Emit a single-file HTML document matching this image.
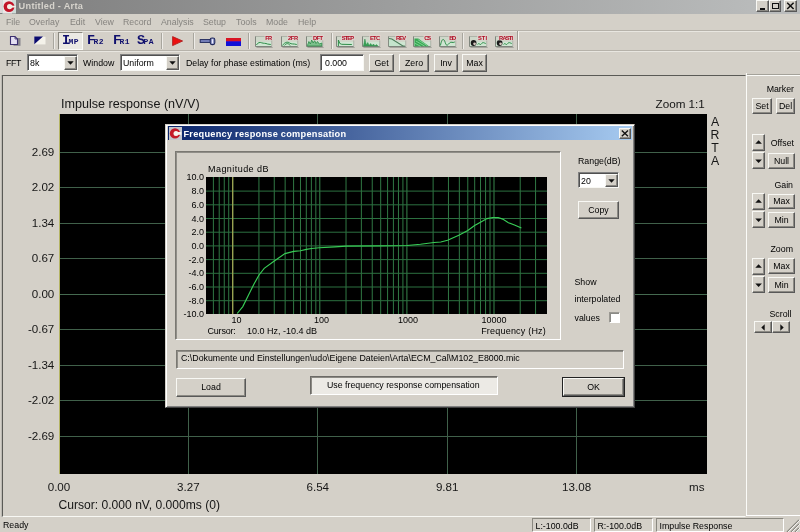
<!DOCTYPE html>
<html><head><meta charset="utf-8">
<style>
*{box-sizing:border-box;margin:0;padding:0}
html,body{width:800px;height:532px;overflow:hidden;background:#d4d0c8}
body{font-family:"Liberation Sans",sans-serif;font-size:8.8px;color:#000;position:relative}
.a{position:absolute}
.t{position:absolute;white-space:nowrap;line-height:10px;height:10px}
.p{position:absolute;white-space:nowrap;line-height:14px;height:14px;font-size:12px;color:#161616}
.btn{position:absolute;background:#d4d0c8;border:1px solid;border-color:#f8f8f4 #585858 #585858 #f8f8f4;box-shadow:inset -1px -1px 0 #8c8a84;text-align:center;white-space:nowrap}
.sunk{position:absolute;background:#fff;border:1px solid;border-color:#808080 #f8f8f4 #f8f8f4 #808080;box-shadow:inset 1px 1px 0 #505050}
.m{position:absolute;top:17.3px;color:#85837f;line-height:10px;white-space:nowrap}
.sep{position:absolute;top:33px;width:2px;height:16px;border-left:1px solid #a8a69e;border-right:1px solid #eeece8}
</style></head><body><div id="root" style="position:absolute;left:0;top:0;width:800px;height:532px;will-change:transform;filter:blur(0.5px)">

<div class="a" style="left:0;top:0;width:800px;height:13.6px;background:linear-gradient(90deg,#7e7e7e 0%,#bcbebe 100%)"></div>
<div class="t" style="left:18.6px;top:1.3px;font-weight:bold;color:#d6d3cc;font-size:9.2px;letter-spacing:0.28px">Untitled - Arta</div>
<div class="a" style="left:0;top:0;width:2px;height:13px;background:#ddd6d8"></div>
<svg class="a" style="left:2px;top:0" width="14" height="14" viewBox="0 0 14 14"><rect x="0" y="0" width="14" height="13.5" fill="#cfdcd8"/><rect x="1" y="0" width="9" height="13.5" fill="#ece6e6"/><circle cx="7" cy="6.6" r="5.4" fill="#c21428"/><circle cx="7.6" cy="6.6" r="2.6" fill="#f3efe6"/><path d="M8 5.2 L13.6 5.9 L13.6 7.3 L8 8 Z" fill="#f3efe6"/></svg>
<div class="btn" style="left:756px;top:0px;width:12.7px;height:11.5px"></div>
<div class="btn" style="left:768.7px;top:0px;width:12.8px;height:11.5px"></div>
<div class="btn" style="left:784px;top:0px;width:13px;height:11.5px"></div>
<div class="a" style="left:759.5px;top:7.8px;width:5px;height:1.8px;background:#111"></div>
<div class="a" style="left:772px;top:2.8px;width:7px;height:6.6px;border:1px solid #111;border-top-width:1.8px"></div>
<svg class="a" style="left:786px;top:2.2px" width="9" height="8" viewBox="0 0 9 8"><path d="M1.2 0.8 L7.6 7 M7.6 0.8 L1.2 7" stroke="#111" stroke-width="1.5"/></svg>
<span class="m" style="left:6px">File</span>
<span class="m" style="left:29px">Overlay</span>
<span class="m" style="left:70px">Edit</span>
<span class="m" style="left:95px">View</span>
<span class="m" style="left:123px">Record</span>
<span class="m" style="left:161px">Analysis</span>
<span class="m" style="left:203px">Setup</span>
<span class="m" style="left:236px">Tools</span>
<span class="m" style="left:266px">Mode</span>
<span class="m" style="left:298px">Help</span>
<div class="a" style="left:0;top:29.6px;width:800px;height:1px;background:#b6b2aa"></div>
<div class="a" style="left:0;top:30.6px;width:800px;height:1px;background:#e8e6e0"></div>
<div id="tb1">
<svg class="a" style="left:9px;top:35px" width="13" height="12" viewBox="0 0 13 12"><rect x="4.5" y="3" width="7" height="7.8" fill="#86848c"/><path d="M1.5 1.5 L6 1.5 L8.5 4 L8.5 9.5 L1.5 9.5 Z" fill="#e4e0f2" stroke="#3c3070" stroke-width="1.1"/><path d="M6 1.5 L6 4 L8.5 4" fill="none" stroke="#3c3070" stroke-width="0.8"/></svg>
<svg class="a" style="left:34px;top:36px" width="12" height="9" viewBox="0 0 12 9"><rect x="0.5" y="0.8" width="11" height="7.6" fill="#f4f2ea"/><path d="M0.3 0.6 L9 0.6 L0.3 8.2 Z" fill="#0c0c70"/></svg>
<div class="sep" style="left:53px"></div>
<div class="sep" style="left:161px"></div>
<div class="sep" style="left:193px"></div>
<div class="sep" style="left:248px"></div>
<div class="sep" style="left:331px"></div>
<div class="sep" style="left:462px"></div>
<div class="a" style="left:58px;top:32px;width:25px;height:18px;background:#ebe9e4;border:1px solid;border-color:#8a8880 #fbfbf8 #fbfbf8 #8a8880"></div>
<div class="a" style="left:62px;top:34px;height:14px;line-height:14px;white-space:nowrap;font-family:'Liberation Mono',monospace;font-weight:bold;color:#10106e"><span style="font-size:13.5px;letter-spacing:-1.6px">I</span><span style="font-size:8px;letter-spacing:0.45px">MP</span></div>
<div class="a" style="left:87px;top:34px;height:14px;line-height:14px;white-space:nowrap;font-family:'Liberation Mono',monospace;font-weight:bold;color:#10106e"><span style="font-size:13.5px;letter-spacing:-1.6px">F</span><span style="font-size:8px;letter-spacing:0.45px">R2</span></div>
<div class="a" style="left:113px;top:34px;height:14px;line-height:14px;white-space:nowrap;font-family:'Liberation Mono',monospace;font-weight:bold;color:#10106e"><span style="font-size:13.5px;letter-spacing:-1.6px">F</span><span style="font-size:8px;letter-spacing:0.45px">R1</span></div>
<div class="a" style="left:137px;top:34px;height:14px;line-height:14px;white-space:nowrap;font-family:'Liberation Mono',monospace;font-weight:bold;color:#10106e"><span style="font-size:13.5px;letter-spacing:-1.6px">S</span><span style="font-size:8px;letter-spacing:0.45px">PA</span></div>
<svg class="a" style="left:171px;top:35px" width="14" height="12" viewBox="0 0 14 12"><path d="M1.6 1.6 L11.6 6 L1.6 10.6 Z" fill="#ec1010" stroke="#b02020" stroke-width="0.9" stroke-linejoin="round"/></svg>
<svg class="a" style="left:199px;top:36px" width="18" height="11" viewBox="0 0 18 11"><rect x="1.2" y="3.6" width="10.5" height="2.8" fill="#7c86c0" stroke="#20285c" stroke-width="1"/><rect x="11.2" y="2" width="4.6" height="6.6" rx="1.8" fill="#9098c8" stroke="#20285c" stroke-width="1.1"/><rect x="13" y="3.2" width="1" height="4.2" fill="#eef"/></svg>
<div class="a" style="left:226px;top:38px;width:15px;height:3px;background:#d81424"></div>
<div class="a" style="left:226px;top:40.5px;width:15px;height:5px;background:linear-gradient(180deg,#7010a0 0,#1010d8 30%,#1010d8 100%)"></div>
<svg class="a" style="left:255.4px;top:33.6px" width="18.2" height="14" viewBox="0 0 19 14" preserveAspectRatio="none"><rect x="0.5" y="2.5" width="17" height="10" fill="#cfd8ca"/><rect x="1" y="8" width="16" height="4.5" fill="#cfe6d2"/><path d="M0.5 2.2 L0.5 12.5 L17.5 12.5" fill="none" stroke="#7c827a" stroke-width="1"/><path d="M0.5 2.5 L17.5 2.5 L17.5 12.5" fill="none" stroke="#a4aaa0" stroke-width="0.8"/><rect x="1.5" y="13" width="17" height="0.8" fill="#9a9a94"/><path d="M1.5 11 C3 8.5,5 8,7 8.8 S11 9,13 10 L16.5 10.5" fill="none" stroke="#2a8a46" stroke-width="1"/><rect x="10.0" y="0.8" width="8.6" height="5.6" fill="#e2d4d0" opacity="0.8"/><text x="17.8" y="5.8" text-anchor="end" font-family="Liberation Sans" font-weight="bold" font-size="6" fill="#b00a22" textLength="7" lengthAdjust="spacing">FR</text></svg>
<svg class="a" style="left:281.4px;top:33.6px" width="18.2" height="14" viewBox="0 0 19 14" preserveAspectRatio="none"><rect x="0.5" y="2.5" width="17" height="10" fill="#cfd8ca"/><rect x="1" y="8" width="16" height="4.5" fill="#cfe6d2"/><path d="M0.5 2.2 L0.5 12.5 L17.5 12.5" fill="none" stroke="#7c827a" stroke-width="1"/><path d="M0.5 2.5 L17.5 2.5 L17.5 12.5" fill="none" stroke="#a4aaa0" stroke-width="0.8"/><rect x="1.5" y="13" width="17" height="0.8" fill="#9a9a94"/><path d="M1.5 11.5 C4 8,7 7.5,9 9 S13 9.5,16.5 10.5 M3.5 11.5 C5.5 9,8 9,9.5 11.5" fill="none" stroke="#2a8a46" stroke-width="1"/><rect x="6.5" y="0.8" width="12.1" height="5.6" fill="#e2d4d0" opacity="0.8"/><text x="17.8" y="5.8" text-anchor="end" font-family="Liberation Sans" font-weight="bold" font-size="6" fill="#b00a22" textLength="10.5" lengthAdjust="spacing">2FR</text></svg>
<svg class="a" style="left:306.4px;top:33.6px" width="18.2" height="14" viewBox="0 0 19 14" preserveAspectRatio="none"><rect x="0.5" y="2.5" width="17" height="10" fill="#cfd8ca"/><rect x="1" y="8" width="16" height="4.5" fill="#cfe6d2"/><path d="M0.5 2.2 L0.5 12.5 L17.5 12.5" fill="none" stroke="#7c827a" stroke-width="1"/><path d="M0.5 2.5 L17.5 2.5 L17.5 12.5" fill="none" stroke="#a4aaa0" stroke-width="0.8"/><rect x="1.5" y="13" width="17" height="0.8" fill="#9a9a94"/><path d="M1.5 11.5 L3 7.5 L4.5 10 L6 6 L7.5 9 L9 6.5 L10.5 9.5 L12 7.5 L14 10 L16.5 9 L16.5 12 L1.5 12 Z" fill="#7cc08c" stroke="#2a8a46" stroke-width="0.8"/><rect x="6.5" y="0.8" width="12.1" height="5.6" fill="#e2d4d0" opacity="0.8"/><text x="17.8" y="5.8" text-anchor="end" font-family="Liberation Sans" font-weight="bold" font-size="6" fill="#b00a22" textLength="10.5" lengthAdjust="spacing">DFT</text></svg>
<svg class="a" style="left:336.4px;top:33.6px" width="19.2" height="14" viewBox="0 0 20 14" preserveAspectRatio="none"><rect x="0.5" y="2.5" width="18" height="10" fill="#cfd8ca"/><rect x="1" y="8" width="17" height="4.5" fill="#cfe6d2"/><path d="M0.5 2.2 L0.5 12.5 L18.5 12.5" fill="none" stroke="#7c827a" stroke-width="1"/><path d="M0.5 2.5 L18.5 2.5 L18.5 12.5" fill="none" stroke="#a4aaa0" stroke-width="0.8"/><rect x="1.5" y="13" width="18" height="0.8" fill="#9a9a94"/><path d="M2.5 12 L2.5 6 L4 9.5 L6 10.3 L16.5 10.5" fill="none" stroke="#2a8a46" stroke-width="1"/><rect x="5.2" y="0.8" width="14.4" height="5.6" fill="#e2d4d0" opacity="0.8"/><text x="18.8" y="5.8" text-anchor="end" font-family="Liberation Sans" font-weight="bold" font-size="6" fill="#b00a22" textLength="12.8" lengthAdjust="spacing">STEP</text></svg>
<svg class="a" style="left:362.4px;top:33.6px" width="19.2" height="14" viewBox="0 0 20 14" preserveAspectRatio="none"><rect x="0.5" y="2.5" width="18" height="10" fill="#cfd8ca"/><rect x="1" y="8" width="17" height="4.5" fill="#cfe6d2"/><path d="M0.5 2.2 L0.5 12.5 L18.5 12.5" fill="none" stroke="#7c827a" stroke-width="1"/><path d="M0.5 2.5 L18.5 2.5 L18.5 12.5" fill="none" stroke="#a4aaa0" stroke-width="0.8"/><rect x="1.5" y="13" width="18" height="0.8" fill="#9a9a94"/><path d="M1.5 12 L3 5 L4.5 11 L6 8.5 L7.5 11.5 L9 9.5 L10.5 11.5 L12 10 L13.5 12 L15 10.5 L16.5 12 Z" fill="#3aa256" stroke="#2a8a46" stroke-width="0.5"/><rect x="7.5" y="0.8" width="12.1" height="5.6" fill="#e2d4d0" opacity="0.8"/><text x="18.8" y="5.8" text-anchor="end" font-family="Liberation Sans" font-weight="bold" font-size="6" fill="#b00a22" textLength="10.5" lengthAdjust="spacing">ETC</text></svg>
<svg class="a" style="left:388.4px;top:33.6px" width="19.2" height="14" viewBox="0 0 20 14" preserveAspectRatio="none"><rect x="0.5" y="2.5" width="18" height="10" fill="#cfd8ca"/><rect x="1" y="8" width="17" height="4.5" fill="#cfe6d2"/><path d="M0.5 2.2 L0.5 12.5 L18.5 12.5" fill="none" stroke="#7c827a" stroke-width="1"/><path d="M0.5 2.5 L18.5 2.5 L18.5 12.5" fill="none" stroke="#a4aaa0" stroke-width="0.8"/><rect x="1.5" y="13" width="18" height="0.8" fill="#9a9a94"/><path d="M1 4.5 L4 5 L15.5 12 L1 12 Z" fill="#c4e4cc"/><path d="M1 4.5 L4 5 L15.5 12 L17.5 12" fill="none" stroke="#4a7a58" stroke-width="1.1"/><rect x="7.5" y="0.8" width="12.1" height="5.6" fill="#e2d4d0" opacity="0.8"/><text x="18.8" y="5.8" text-anchor="end" font-family="Liberation Sans" font-weight="bold" font-size="6" fill="#b00a22" textLength="10.5" lengthAdjust="spacing">REV</text></svg>
<svg class="a" style="left:413.4px;top:33.6px" width="19.2" height="14" viewBox="0 0 20 14" preserveAspectRatio="none"><rect x="0.5" y="2.5" width="18" height="10" fill="#cfd8ca"/><rect x="1" y="8" width="17" height="4.5" fill="#cfe6d2"/><path d="M0.5 2.2 L0.5 12.5 L18.5 12.5" fill="none" stroke="#7c827a" stroke-width="1"/><path d="M0.5 2.5 L18.5 2.5 L18.5 12.5" fill="none" stroke="#a4aaa0" stroke-width="0.8"/><rect x="1.5" y="13" width="18" height="0.8" fill="#9a9a94"/><path d="M1.5 4.5 L5.5 4.5 L15 11 L16.5 12.3 L1.5 12.3 Z" fill="#36a852"/><path d="M3 7 L12 12 M2 9.3 L8 12.3 M5 5.5 L15 11.8" stroke="#9fe0ae" stroke-width="0.7"/><rect x="11.0" y="0.8" width="8.6" height="5.6" fill="#e2d4d0" opacity="0.8"/><text x="18.8" y="5.8" text-anchor="end" font-family="Liberation Sans" font-weight="bold" font-size="6" fill="#b00a22" textLength="7" lengthAdjust="spacing">CS</text></svg>
<svg class="a" style="left:439.4px;top:33.6px" width="18.2" height="14" viewBox="0 0 19 14" preserveAspectRatio="none"><rect x="0.5" y="2.5" width="17" height="10" fill="#cfd8ca"/><rect x="1" y="8" width="16" height="4.5" fill="#cfe6d2"/><path d="M0.5 2.2 L0.5 12.5 L17.5 12.5" fill="none" stroke="#7c827a" stroke-width="1"/><path d="M0.5 2.5 L17.5 2.5 L17.5 12.5" fill="none" stroke="#a4aaa0" stroke-width="0.8"/><rect x="1.5" y="13" width="17" height="0.8" fill="#9a9a94"/><path d="M1.5 11.5 C3 4,5 4,6.5 8.5 S9 11,11 9 S14 9.5,16.5 8" fill="none" stroke="#2a8a46" stroke-width="1"/><rect x="10.0" y="0.8" width="8.6" height="5.6" fill="#e2d4d0" opacity="0.8"/><text x="17.8" y="5.8" text-anchor="end" font-family="Liberation Sans" font-weight="bold" font-size="6" fill="#b00a22" textLength="7" lengthAdjust="spacing">BD</text></svg>
<svg class="a" style="left:469.4px;top:33.6px" width="19.2" height="14" viewBox="0 0 20 14" preserveAspectRatio="none"><rect x="0.5" y="2.5" width="18" height="10" fill="#cfd8ca"/><rect x="1" y="8" width="17" height="4.5" fill="#cfe6d2"/><path d="M0.5 2.2 L0.5 12.5 L18.5 12.5" fill="none" stroke="#7c827a" stroke-width="1"/><path d="M0.5 2.5 L18.5 2.5 L18.5 12.5" fill="none" stroke="#a4aaa0" stroke-width="0.8"/><rect x="1.5" y="13" width="18" height="0.8" fill="#9a9a94"/><circle cx="4.8" cy="9" r="3" fill="#1a1a1a"/><circle cx="5.8" cy="9.8" r="1.4" fill="#d8c8c0"/><path d="M9 10.5 C10.5 8,11.5 12,13 9.8 S15.5 9,17.5 9.5" fill="none" stroke="#2a8a46" stroke-width="1"/><rect x="8.5" y="0.8" width="11.1" height="5.6" fill="#e2d4d0" opacity="0.8"/><text x="18.8" y="5.8" text-anchor="end" font-family="Liberation Sans" font-weight="bold" font-size="6" fill="#b00a22" textLength="9.5" lengthAdjust="spacing">STI</text></svg>
<svg class="a" style="left:495.4px;top:33.6px" width="19.2" height="14" viewBox="0 0 20 14" preserveAspectRatio="none"><rect x="0.5" y="2.5" width="18" height="10" fill="#cfd8ca"/><rect x="1" y="8" width="17" height="4.5" fill="#cfe6d2"/><path d="M0.5 2.2 L0.5 12.5 L18.5 12.5" fill="none" stroke="#7c827a" stroke-width="1"/><path d="M0.5 2.5 L18.5 2.5 L18.5 12.5" fill="none" stroke="#a4aaa0" stroke-width="0.8"/><rect x="1.5" y="13" width="18" height="0.8" fill="#9a9a94"/><circle cx="4.8" cy="9" r="3" fill="#1a1a1a"/><circle cx="5.8" cy="9.8" r="1.4" fill="#d8c8c0"/><path d="M9 10.5 C10.5 8,11.5 12,13 9.8 S15.5 9,17.5 9.5" fill="none" stroke="#2a8a46" stroke-width="1"/><rect x="3.5" y="0.8" width="16.1" height="5.6" fill="#e2d4d0" opacity="0.8"/><text x="18.8" y="5.8" text-anchor="end" font-family="Liberation Sans" font-weight="bold" font-size="6" fill="#b00a22" textLength="14.5" lengthAdjust="spacing">RASTI</text></svg>
<div class="a" style="left:517px;top:31px;width:2px;height:19.5px;border-left:1px solid #a09e96;border-right:1px solid #f6f4f0"></div>
</div>
<div class="a" style="left:0;top:50px;width:800px;height:1px;background:#b6b2aa"></div>
<div class="a" style="left:0;top:51px;width:800px;height:1px;background:#e8e6e0"></div>
<div class="t" style="left:6px;top:57.8px;letter-spacing:-0.4px">FFT</div>
<div class="sunk" style="left:27px;top:54px;width:50.5px;height:17px"></div>
<div class="t" style="left:30px;top:58.4px">8k</div>
<div class="btn" style="left:64.0px;top:55.5px;width:12.5px;height:14px"></div>
<svg class="a" style="left:66.7px;top:61.0px" width="7" height="4" viewBox="0 0 7 4"><path d="M0.3 0.3 L6.7 0.3 L3.5 3.8 Z" fill="#111"/></svg>
<div class="t" style="left:83px;top:57.8px">Window</div>
<div class="sunk" style="left:120px;top:54px;width:59.5px;height:17px"></div>
<div class="t" style="left:123px;top:58.4px">Uniform</div>
<div class="btn" style="left:166.0px;top:55.5px;width:12.5px;height:14px"></div>
<svg class="a" style="left:168.7px;top:61.0px" width="7" height="4" viewBox="0 0 7 4"><path d="M0.3 0.3 L6.7 0.3 L3.5 3.8 Z" fill="#111"/></svg>
<div class="t" style="left:186px;top:57.8px">Delay for phase estimation (ms)</div>
<div class="sunk" style="left:320px;top:54px;width:44px;height:17px"></div>
<div class="t" style="left:325px;top:58.3px">0.000</div>
<div class="btn" style="left:369px;top:54px;width:25px;height:18px;line-height:16px;">Get</div>
<div class="btn" style="left:399px;top:54px;width:30px;height:18px;line-height:16px;">Zero</div>
<div class="btn" style="left:434px;top:54px;width:24px;height:18px;line-height:16px;">Inv</div>
<div class="btn" style="left:462px;top:54px;width:25px;height:18px;line-height:16px;">Max</div>
<div class="a" style="left:746px;top:74px;width:54px;height:1px;background:#a4a29a"></div>
<div class="a" style="left:746px;top:75px;width:54px;height:1px;background:#fbfbf8"></div>
<div class="a" style="left:2px;top:75px;width:744px;height:441.6px;border:1px solid;border-color:#5a5a56 #d4d0c8 #f8f8f4 #5a5a56;border-left-width:1.4px;border-top-width:1.3px;box-shadow:-1px 0 0 #bcbab4"></div>
<div class="p" style="left:61px;top:97px;font-size:12.6px">Impulse response (nV/V)</div>
<div class="p" style="left:655.5px;top:97px;font-size:11.7px">Zoom 1:1</div>
<div class="a" id="plot" style="left:59px;top:114px;width:648px;height:360px;background:#000;overflow:hidden">
<div class="a" style="left:0;top:37.5px;width:648px;height:1px;background:#40604a"></div>
<div class="a" style="left:0;top:73.0px;width:648px;height:1px;background:#40604a"></div>
<div class="a" style="left:0;top:108.5px;width:648px;height:1px;background:#40604a"></div>
<div class="a" style="left:0;top:144.0px;width:648px;height:1px;background:#40604a"></div>
<div class="a" style="left:0;top:215.0px;width:648px;height:1px;background:#40604a"></div>
<div class="a" style="left:0;top:250.5px;width:648px;height:1px;background:#40604a"></div>
<div class="a" style="left:0;top:286.0px;width:648px;height:1px;background:#40604a"></div>
<div class="a" style="left:0;top:321.5px;width:648px;height:1px;background:#40604a"></div>
<div class="a" style="left:0;top:179.5px;width:648px;height:1px;background:#456a50"></div>
<div class="a" style="left:128.9px;top:0;width:1px;height:360px;background:#40604a"></div>
<div class="a" style="left:258.3px;top:0;width:1px;height:360px;background:#40604a"></div>
<div class="a" style="left:387.70000000000005px;top:0;width:1px;height:360px;background:#40604a"></div>
<div class="a" style="left:517.1px;top:0;width:1px;height:360px;background:#40604a"></div>
<div class="a" style="left:0;top:0;width:1px;height:360px;background:#b4b464"></div>
</div>
<div class="p" style="right:745.7px;top:144.5px;font-size:11.6px">2.69</div>
<div class="p" style="right:745.7px;top:180.0px;font-size:11.6px">2.02</div>
<div class="p" style="right:745.7px;top:215.5px;font-size:11.6px">1.34</div>
<div class="p" style="right:745.7px;top:251.0px;font-size:11.6px">0.67</div>
<div class="p" style="right:745.7px;top:286.5px;font-size:11.6px">0.00</div>
<div class="p" style="right:745.7px;top:322.0px;font-size:11.6px">-0.67</div>
<div class="p" style="right:745.7px;top:357.5px;font-size:11.6px">-1.34</div>
<div class="p" style="right:745.7px;top:393.0px;font-size:11.6px">-2.02</div>
<div class="p" style="right:745.7px;top:428.5px;font-size:11.6px">-2.69</div>
<div class="p" style="left:39.0px;width:40px;text-align:center;top:480px;font-size:11.6px">0.00</div>
<div class="p" style="left:168.4px;width:40px;text-align:center;top:480px;font-size:11.6px">3.27</div>
<div class="p" style="left:297.8px;width:40px;text-align:center;top:480px;font-size:11.6px">6.54</div>
<div class="p" style="left:427.20000000000005px;width:40px;text-align:center;top:480px;font-size:11.6px">9.81</div>
<div class="p" style="left:556.6px;width:40px;text-align:center;top:480px;font-size:11.6px">13.08</div>
<div class="p" style="left:689px;top:480px;font-size:11.6px">ms</div>
<div class="p" style="left:58.5px;top:498px;font-size:12.1px">Cursor: 0.000 nV, 0.000ms (0)</div>
<div class="p" style="left:706px;width:18px;text-align:center;top:114.5px;font-size:12.3px">A</div>
<div class="p" style="left:706px;width:18px;text-align:center;top:127.8px;font-size:12.3px">R</div>
<div class="p" style="left:706px;width:18px;text-align:center;top:141.1px;font-size:12.3px">T</div>
<div class="p" style="left:706px;width:18px;text-align:center;top:154.4px;font-size:12.3px">A</div>
<div class="a" style="left:746px;top:73px;width:1px;height:443px;background:#fbfbf8"></div>
<div class="a" style="left:746px;top:515px;width:54px;height:1px;background:#fff"></div>
<div class="t" style="right:6px;top:83.5px">Marker</div>
<div class="btn" style="left:752px;top:98px;width:20px;height:16px;line-height:14px;">Set</div>
<div class="btn" style="left:776px;top:98px;width:19px;height:16px;line-height:14px;">Del</div>
<div class="btn" style="left:752px;top:134px;width:13px;height:17px"></div>
<svg class="a" style="left:754.8px;top:140.2px" width="7.2" height="4.5" viewBox="0 0 8 5"><path d="M0.3 4.3 L7.7 4.3 L4 0.3 Z" fill="#111"/></svg>
<div class="btn" style="left:752px;top:152px;width:13px;height:17px"></div>
<svg class="a" style="left:754.8px;top:158.7px" width="7.2" height="4.5" viewBox="0 0 8 5"><path d="M0.3 0.5 L7.7 0.5 L4 4.5 Z" fill="#111"/></svg>
<div class="t" style="right:6px;top:137.8px">Offset</div>
<div class="btn" style="left:768px;top:153px;width:27px;height:16px;line-height:14px;">Null</div>
<div class="t" style="right:7px;top:180.4px">Gain</div>
<div class="btn" style="left:752px;top:193px;width:13px;height:17px"></div>
<svg class="a" style="left:754.8px;top:199.2px" width="7.2" height="4.5" viewBox="0 0 8 5"><path d="M0.3 4.3 L7.7 4.3 L4 0.3 Z" fill="#111"/></svg>
<div class="btn" style="left:752px;top:211px;width:13px;height:17px"></div>
<svg class="a" style="left:754.8px;top:217.7px" width="7.2" height="4.5" viewBox="0 0 8 5"><path d="M0.3 0.5 L7.7 0.5 L4 4.5 Z" fill="#111"/></svg>
<div class="btn" style="left:768px;top:194px;width:27px;height:15px;line-height:13px;">Max</div>
<div class="btn" style="left:768px;top:212px;width:27px;height:16px;line-height:14px;">Min</div>
<div class="t" style="right:7px;top:244.3px">Zoom</div>
<div class="btn" style="left:752px;top:258px;width:13px;height:17px"></div>
<svg class="a" style="left:754.8px;top:264.2px" width="7.2" height="4.5" viewBox="0 0 8 5"><path d="M0.3 4.3 L7.7 4.3 L4 0.3 Z" fill="#111"/></svg>
<div class="btn" style="left:752px;top:276px;width:13px;height:17px"></div>
<svg class="a" style="left:754.8px;top:282.7px" width="7.2" height="4.5" viewBox="0 0 8 5"><path d="M0.3 0.5 L7.7 0.5 L4 4.5 Z" fill="#111"/></svg>
<div class="btn" style="left:768px;top:258px;width:27px;height:16px;line-height:14px;">Max</div>
<div class="btn" style="left:768px;top:277px;width:27px;height:16px;line-height:14px;">Min</div>
<div class="t" style="right:8.5px;top:309px">Scroll</div>
<div class="btn" style="left:754px;top:321px;width:18px;height:12px"></div>
<svg class="a" style="left:760.5px;top:323.5px" width="4" height="7" viewBox="0 0 4 7"><path d="M3.7 0.2 L3.7 6.8 L0.3 3.5 Z" fill="#111"/></svg>
<div class="btn" style="left:772px;top:321px;width:18px;height:12px"></div>
<svg class="a" style="left:779.5px;top:323.5px" width="4" height="7" viewBox="0 0 4 7"><path d="M0.3 0.2 L0.3 6.8 L3.7 3.5 Z" fill="#111"/></svg>
<div class="t" style="left:3px;top:520.1px">Ready</div>
<div class="a" style="left:532px;top:518px;width:59px;height:14px;border:1px solid;border-color:#8a8880 #fff #fff #8a8880"></div>
<div class="t" style="left:535.5px;top:520.5px">L:-100.0dB</div>
<div class="a" style="left:594px;top:518px;width:59px;height:14px;border:1px solid;border-color:#8a8880 #fff #fff #8a8880"></div>
<div class="t" style="left:597.5px;top:520.5px">R:-100.0dB</div>
<div class="a" style="left:656px;top:518px;width:128px;height:14px;border:1px solid;border-color:#8a8880 #fff #fff #8a8880"></div>
<div class="t" style="left:659.5px;top:520.5px">Impulse Response</div>
<svg class="a" style="left:786px;top:519px" width="14" height="13" viewBox="0 0 14 13"><path d="M13 1 L1 13 M13 5 L5 13 M13 9 L9 13" stroke="#8a8880" stroke-width="1.4"/><path d="M14 1 L2 13 M14 5 L6 13 M14 9 L10 13" stroke="#fff" stroke-width="0.8"/></svg>
<div id="dlg">
<div class="a" style="left:165px;top:124px;width:470px;height:283.5px;background:#d4d0c8;border:1px solid;border-color:#d4d0c8 #404040 #404040 #d4d0c8;box-shadow:inset 1px 1px 0 #fff, inset -1px -1px 0 #808080"></div>
<div class="a" style="left:168px;top:126.3px;width:464px;height:14.2px;background:linear-gradient(90deg,#0a246a 0%,#a6caf0 100%)"></div>
<svg class="a" style="left:169px;top:127px" width="13" height="13" viewBox="0 0 13 13"><rect x="0" y="0" width="13" height="13" fill="#c4c6cc"/><circle cx="6" cy="6.4" r="5.2" fill="#c41828"/><circle cx="7" cy="6.4" r="2.5" fill="#f6f2ee"/><rect x="7.4" y="5" width="5" height="2.8" fill="#f6f2ee"/></svg>
<div class="t" style="left:183.5px;top:128.8px;font-weight:bold;color:#fff;font-size:9.2px;letter-spacing:0.26px">Frequency response compensation</div>
<div class="btn" style="left:619px;top:128px;width:12px;height:11px"></div>
<svg class="a" style="left:621px;top:130px" width="8" height="7" viewBox="0 0 8 7"><path d="M0.8 0.6 L7 6.2 M7 0.6 L0.8 6.2" stroke="#111" stroke-width="1.4"/></svg>
<div class="a" style="left:175px;top:151px;width:386px;height:189px;border:1px solid;border-color:#7a7872 #fff #fff #7a7872;box-shadow:inset 1px 1px 0 #908e88"></div>
<div class="t" style="left:208px;top:164px;letter-spacing:0.45px;font-size:9px">Magnitude dB</div>
<svg class="a" style="left:206px;top:177px" width="341" height="137.3" viewBox="0 0 341 137.3"><rect width="341" height="137.3" fill="#000"/>
<rect x="6.88" y="0" width="1" height="137.3" fill="#307844" opacity="1"/>
<rect x="12.71" y="0" width="1" height="137.3" fill="#307844" opacity="1"/>
<rect x="17.76" y="0" width="1" height="137.3" fill="#307844" opacity="1"/>
<rect x="22.21" y="0" width="1" height="137.3" fill="#307844" opacity="1"/>
<rect x="26.20" y="0" width="1" height="137.3" fill="#38864c" opacity="1"/>
<rect x="52.42" y="0" width="1" height="137.3" fill="#307844" opacity="1"/>
<rect x="67.76" y="0" width="1" height="137.3" fill="#307844" opacity="1"/>
<rect x="78.64" y="0" width="1" height="137.3" fill="#307844" opacity="1"/>
<rect x="87.08" y="0" width="1" height="137.3" fill="#307844" opacity="1"/>
<rect x="93.98" y="0" width="1" height="137.3" fill="#307844" opacity="1"/>
<rect x="99.81" y="0" width="1" height="137.3" fill="#307844" opacity="1"/>
<rect x="104.86" y="0" width="1" height="137.3" fill="#307844" opacity="1"/>
<rect x="109.31" y="0" width="1" height="137.3" fill="#307844" opacity="1"/>
<rect x="113.30" y="0" width="1" height="137.3" fill="#38864c" opacity="1"/>
<rect x="139.52" y="0" width="1" height="137.3" fill="#307844" opacity="1"/>
<rect x="154.86" y="0" width="1" height="137.3" fill="#307844" opacity="1"/>
<rect x="165.74" y="0" width="1" height="137.3" fill="#307844" opacity="1"/>
<rect x="174.18" y="0" width="1" height="137.3" fill="#307844" opacity="1"/>
<rect x="181.08" y="0" width="1" height="137.3" fill="#307844" opacity="1"/>
<rect x="186.91" y="0" width="1" height="137.3" fill="#307844" opacity="1"/>
<rect x="191.96" y="0" width="1" height="137.3" fill="#307844" opacity="1"/>
<rect x="196.41" y="0" width="1" height="137.3" fill="#307844" opacity="1"/>
<rect x="200.40" y="0" width="1" height="137.3" fill="#38864c" opacity="1"/>
<rect x="226.62" y="0" width="1" height="137.3" fill="#307844" opacity="1"/>
<rect x="241.96" y="0" width="1" height="137.3" fill="#307844" opacity="1"/>
<rect x="252.84" y="0" width="1" height="137.3" fill="#307844" opacity="1"/>
<rect x="261.28" y="0" width="1" height="137.3" fill="#307844" opacity="1"/>
<rect x="268.18" y="0" width="1" height="137.3" fill="#307844" opacity="1"/>
<rect x="274.01" y="0" width="1" height="137.3" fill="#307844" opacity="1"/>
<rect x="279.06" y="0" width="1" height="137.3" fill="#307844" opacity="1"/>
<rect x="283.51" y="0" width="1" height="137.3" fill="#307844" opacity="1"/>
<rect x="287.50" y="0" width="1" height="137.3" fill="#38864c" opacity="1"/>
<rect x="313.72" y="0" width="1" height="137.3" fill="#307844" opacity="1"/>
<rect x="329.06" y="0" width="1" height="137.3" fill="#307844" opacity="1"/>
<rect x="0" y="13.60" width="341" height="1" fill="#2c7040" opacity="1"/>
<rect x="0" y="27.30" width="341" height="1" fill="#2c7040" opacity="1"/>
<rect x="0" y="41.00" width="341" height="1" fill="#2c7040" opacity="1"/>
<rect x="0" y="54.70" width="341" height="1" fill="#2c7040" opacity="1"/>
<rect x="0" y="68.40" width="341" height="1" fill="#2c7040" opacity="1"/>
<rect x="0" y="82.10" width="341" height="1" fill="#2c7040" opacity="1"/>
<rect x="0" y="95.80" width="341" height="1" fill="#2c7040" opacity="1"/>
<rect x="0" y="109.50" width="341" height="1" fill="#2c7040" opacity="1"/>
<rect x="0" y="123.20" width="341" height="1" fill="#2c7040" opacity="1"/>
<rect x="26.10" y="0" width="1.2" height="137.3" fill="#a8a854"/>
<path d="M31.2 136.5 L36.8 129.6 L42.4 118.3 L48.0 107.0 L53.0 98.0 L58.2 91.3 L68.3 84.0 L79.0 76.6 L87.7 74.4 L94.5 73.7 L100.3 72.4 L105.5 71.5 L113.4 70.8 L129.0 69.9 L140.0 69.2 L174.0 68.9 L201.0 68.5 L214.5 67.3 L228.0 65.5 L234.8 65.0 L241.6 63.3 L252.8 58.3 L261.8 53.4 L268.6 48.6 L275.4 44.8 L281.0 41.6 L286.6 40.5 L292.2 40.5 L296.7 42.1 L302.4 45.7 L309.1 48.2 L315.4 51.1" fill="none" stroke="#38cc56" stroke-width="1.15"/>
</svg>
<div class="t" style="right:596px;top:172.4px;font-size:9px">10.0</div>
<div class="t" style="right:596px;top:186.1px;font-size:9px">8.0</div>
<div class="t" style="right:596px;top:199.8px;font-size:9px">6.0</div>
<div class="t" style="right:596px;top:213.5px;font-size:9px">4.0</div>
<div class="t" style="right:596px;top:227.2px;font-size:9px">2.0</div>
<div class="t" style="right:596px;top:240.9px;font-size:9px">0.0</div>
<div class="t" style="right:596px;top:254.60000000000002px;font-size:9px">-2.0</div>
<div class="t" style="right:596px;top:268.3px;font-size:9px">-4.0</div>
<div class="t" style="right:596px;top:282.0px;font-size:9px">-6.0</div>
<div class="t" style="right:596px;top:295.7px;font-size:9px">-8.0</div>
<div class="t" style="right:596px;top:309.4px;font-size:9px">-10.0</div>
<div class="t" style="left:216.5px;width:40px;text-align:center;top:314.5px;font-size:9px">10</div>
<div class="t" style="left:301.5px;width:40px;text-align:center;top:314.5px;font-size:9px">100</div>
<div class="t" style="left:388px;width:40px;text-align:center;top:314.5px;font-size:9px">1000</div>
<div class="t" style="left:474px;width:40px;text-align:center;top:314.5px;font-size:9px">10000</div>
<div class="t" style="left:207.5px;top:326px;font-size:9px;letter-spacing:-0.2px">Cursor:</div>
<div class="t" style="left:247px;top:326px;font-size:9px">10.0 Hz, -10.4 dB</div>
<div class="t" style="right:254px;top:326px;font-size:9px;letter-spacing:0.2px">Frequency (Hz)</div>
<div class="t" style="left:578px;top:155.5px">Range(dB)</div>
<div class="sunk" style="left:578px;top:172px;width:40.5px;height:16.4px"></div>
<div class="t" style="left:581px;top:176.4px">20</div>
<div class="btn" style="left:605.0px;top:173.5px;width:12.5px;height:13.399999999999999px"></div>
<svg class="a" style="left:607.7px;top:178.7px" width="7" height="4" viewBox="0 0 7 4"><path d="M0.3 0.3 L6.7 0.3 L3.5 3.8 Z" fill="#111"/></svg>
<div class="btn" style="left:578px;top:200.6px;width:41px;height:18px;line-height:16px;">Copy</div>
<div class="t" style="left:574.5px;top:276.8px">Show</div>
<div class="t" style="left:574.5px;top:294.4px">interpolated</div>
<div class="t" style="left:574.5px;top:312.7px">values</div>
<div class="sunk" style="left:609px;top:312px;width:11px;height:11px;box-shadow:inset 1px 1px 0 #8a8a86;border-color:#9a9892 #fff #fff #9a9892"></div>
<div class="a" style="left:176px;top:350px;width:448px;height:19px;border:1px solid;border-color:#7a7872 #fff #fff #7a7872;box-shadow:inset 1px 1px 0 #908e88"></div>
<div class="t" style="left:181px;top:353px;letter-spacing:0.01px">C:\Dokumente und Einstellungen\udo\Eigene Dateien\Arta\ECM_Cal\M102_E8000.mic</div>
<div class="btn" style="left:176px;top:378px;width:70px;height:19px;line-height:17px;">Load</div>
<div class="a" style="left:310px;top:376px;width:188px;height:19px;background:#eceae5;border:1px solid;border-color:#6c6a66 #fff #fff #6c6a66;box-shadow:inset 1px 1px 0 #8c8a84"></div>
<div class="t" style="left:327px;top:380px">Use frequency response compensation</div>
<div class="a" style="left:562px;top:377px;width:63px;height:20px;border:1px solid #222"></div>
<div class="btn" style="left:563px;top:378px;width:61px;height:18px;line-height:16px;">OK</div>
</div>
</div></body></html>
